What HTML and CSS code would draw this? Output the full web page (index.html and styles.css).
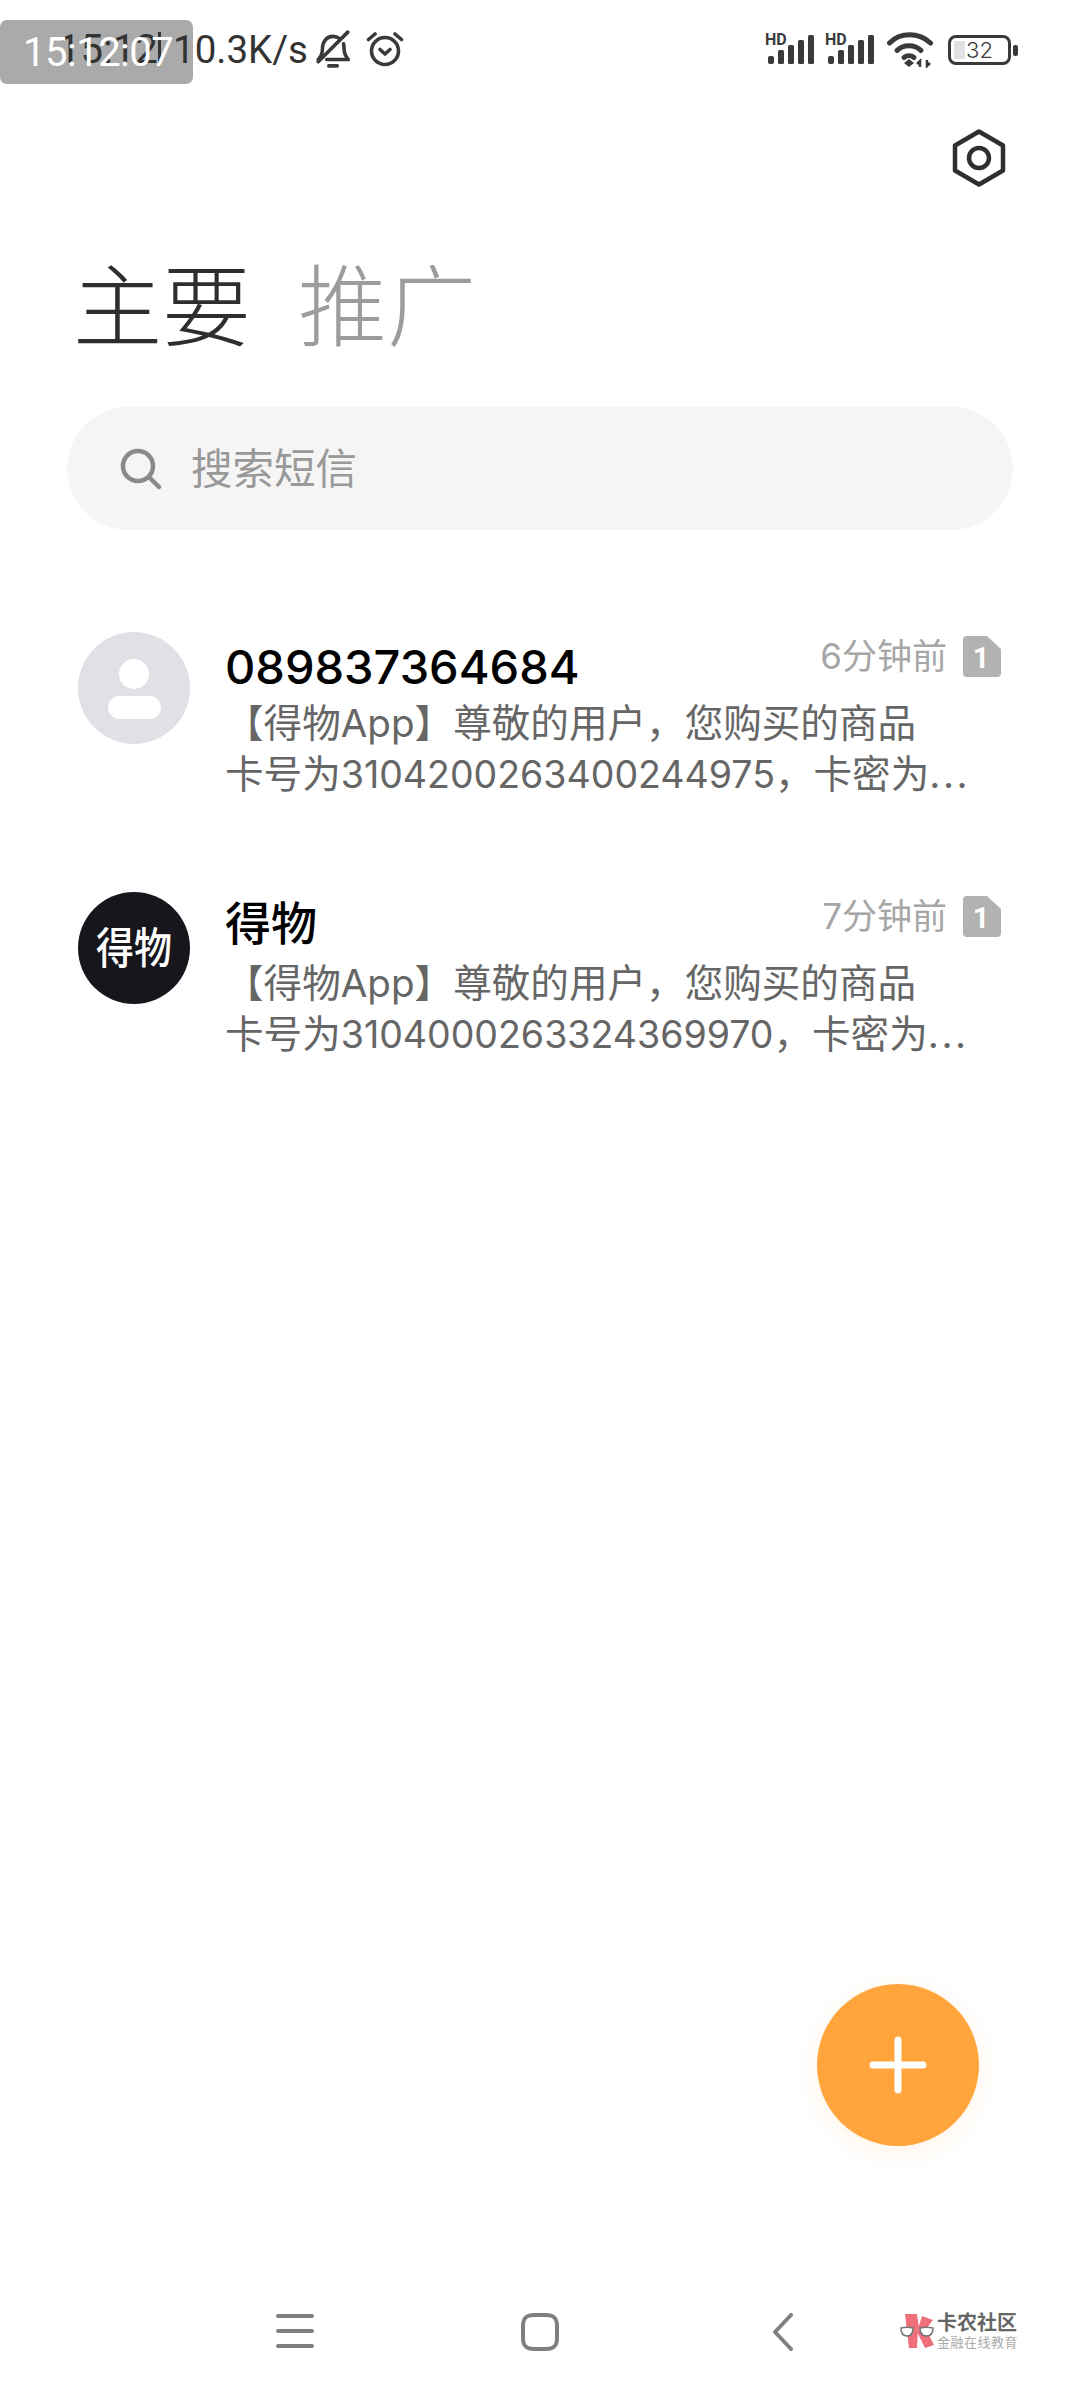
FILE: index.html
```html
<!DOCTYPE html>
<html lang="zh-CN">
<head>
<meta charset="utf-8">
<title>短信</title>
<link rel="stylesheet" href="styles.css">
</head>
<body>
<div class="page">
  <div class="clock-bg"></div>
  <div class="clock-text">15:12:07</div>
  <header class="status">
    <div class="status-left">
      <span class="status-time">15:12</span>
      <span class="status-sep"></span>
      <span class="status-speed">10.3K/s</span>
      <svg class="ico-bell" width="36" height="38" viewBox="0 0 34 36" fill="none" stroke="#3a3a3a" stroke-width="3.4" stroke-linecap="round" stroke-linejoin="round">
        <path d="M3 28c3-3 4-5 4-10 0-7 4-12 10-12 2.500 0 4.500 .8 6 2"/>
        <path d="M27 13c.5 2 .5 3 .5 5 0 5 1.500 7 4 10H11"/>
        <path d="M3 30 31 2"/>
        <path d="M13 34h8"/>
      </svg>
      <svg class="ico-alarm" width="38" height="36" viewBox="0 0 38 36" fill="none" stroke="#3a3a3a" stroke-width="3.6" stroke-linecap="round" stroke-linejoin="round">
        <circle cx="19" cy="20" r="13.500"/>
        <path d="M2.500 8.500 9 3"/>
        <path d="M35.500 8.500 29 3"/>
        <path d="M14 18.500l5 4.500 5-4.500"/>
      </svg>
    </div>
    <div class="status-right">
      <svg width="50" height="40" viewBox="0 -3 50 40">
        <text class="hd" x="0" y="12">HD</text>
        <g fill="#3a3a3a">
          <rect x="3" y="23" width="6" height="8" rx="2"/>
          <rect x="13" y="17" width="6" height="14" rx="1.500"/>
          <rect x="23" y="12" width="6" height="19" rx="1.500"/>
          <rect x="33" y="7" width="6" height="24" rx="1.500"/>
          <rect x="43" y="2" width="6" height="29" rx="1.500"/>
        </g>
      </svg>
      <svg class="sig2" width="50" height="40" viewBox="0 -3 50 40">
        <text class="hd" x="0" y="12">HD</text>
        <g fill="#3a3a3a">
          <rect x="3" y="23" width="6" height="8" rx="2"/>
          <rect x="13" y="17" width="6" height="14" rx="1.500"/>
          <rect x="23" y="12" width="6" height="19" rx="1.500"/>
          <rect x="33" y="7" width="6" height="24" rx="1.500"/>
          <rect x="43" y="2" width="6" height="29" rx="1.500"/>
        </g>
      </svg>
      <svg class="wifi" width="46" height="36" viewBox="0 0 46 36" fill="none" stroke="#3a3a3a" stroke-width="5" stroke-linecap="round">
        <path d="M2.500 11C13 0 32 0 43.500 11"/>
        <path d="M10 18.500C16 12 28 12 34 18.500"/>
        <path d="M17 25.500C20 23 24 23 27 25.500"/>
        <path d="M22 27l5 4-5 4-5-4z" fill="#3a3a3a" stroke="none"/>
        <path d="M33 35v-6l-3 3M40 28v6l3-3" stroke-width="2.500" stroke-linecap="butt"/>
      </svg>
      <div class="battery">
        <div class="battery-body">
          <span class="battery-fill"></span>
          <span class="battery-num">32</span>
        </div>
        <span class="battery-nub"></span>
      </div>
    </div>
  </header>

  <div class="settings-row">
    <svg width="54" height="58" viewBox="0 0 54 58" fill="none" stroke="#2f2f2f" stroke-width="4.500" stroke-linejoin="round">
      <path d="M27 2.500 51 16.500v25L27 55.500 3 41.500v-25z"/>
      <circle cx="27" cy="29" r="10"/>
    </svg>
  </div>

  <nav class="tabs">
    <span class="tab tab-active">主要</span>
    <span class="tab tab-muted">推广</span>
  </nav>

  <div class="search">
    <svg width="42" height="42" viewBox="0 0 42 42" fill="none" stroke="#8a8a8a" stroke-width="4.500" stroke-linecap="round">
      <circle cx="18" cy="18" r="15"/>
      <path d="M29 29l10 10"/>
    </svg>
    <span class="search-text">搜索短信</span>
  </div>

  <main class="list">
    <article class="row">
      <div class="avatar avatar-person">
        <span class="person-head"></span>
        <span class="person-body"></span>
      </div>
      <div class="row-main">
        <div class="row-top">
          <span class="name name-num">089837364684</span>
          <span class="time">6分钟前</span>
          <svg class="sim" width="38" height="41" viewBox="0 0 38 41">
            <path d="M4 0h20l14 13v24a4 4 0 0 1-4 4H4a4 4 0 0 1-4-4V4a4 4 0 0 1 4-4z" fill="#b2b2b2"/>
            <text class="sim-num" x="18" y="32">1</text>
          </svg>
        </div>
        <p class="line">【得物App】尊敬的用户，您购买的商品</p>
        <p class="line">卡号为<span class="digits">3104200263400244975</span>，卡密为<span class="dots">...</span></p>
      </div>
    </article>
    <article class="row">
      <div class="avatar avatar-brand"><span class="brand-text">得物</span></div>
      <div class="row-main">
        <div class="row-top">
          <span class="name name-cjk">得物</span>
          <span class="time">7分钟前</span>
          <svg class="sim" width="38" height="41" viewBox="0 0 38 41">
            <path d="M4 0h20l14 13v24a4 4 0 0 1-4 4H4a4 4 0 0 1-4-4V4a4 4 0 0 1 4-4z" fill="#b2b2b2"/>
            <text class="sim-num" x="18" y="32">1</text>
          </svg>
        </div>
        <p class="line">【得物App】尊敬的用户，您购买的商品</p>
        <p class="line">卡号为<span class="digits">3104000263324369970</span>，卡密为<span class="dots">...</span></p>
      </div>
    </article>
  </main>

  <button class="fab" type="button" aria-label="新建">
    <svg width="58" height="58" viewBox="0 0 58 58" stroke="#fff" stroke-width="7" stroke-linecap="round">
      <path d="M29 4v50M4 29h50"/>
    </svg>
  </button>

  <footer class="navbar">
    <svg class="nav-menu" width="38" height="36" viewBox="0 0 38 36" stroke="#808080" stroke-width="4" stroke-linecap="round">
      <path d="M2 3h34M2 18h34M2 33h34"/>
    </svg>
    <svg class="nav-home" width="38" height="38" viewBox="0 0 38 38" fill="none" stroke="#808080" stroke-width="4">
      <path d="M13 2h12c8 0 11 3 11 11v12c0 8-3 11-11 11H13C5 36 2 33 2 25V13C2 5 5 2 13 2z"/>
    </svg>
    <svg class="nav-back" width="22" height="38" viewBox="0 0 22 38" fill="none" stroke="#808080" stroke-width="4" stroke-linecap="round" stroke-linejoin="round">
      <path d="M19 2 3 19l16 17"/>
    </svg>
    <div class="brand">
      <svg width="38" height="36" viewBox="0 0 38 36">
        <path d="M5 1h12l2 14h-1L17 35H9z" fill="#ef6f7a"/>
        <path d="M22 3l11 4-7 9 8 16-9 3-8-16z" fill="#ef6f7a"/>
        <path d="M1 15c4-1 8-1 12 0 0 5-2 8-6 8s-6-3-6-8z" fill="#fff" stroke="#777" stroke-width="1.500"/>
        <path d="M20 15c4-1 9-1 13 0 0 5-2 8-6.500 8S20 20 20 15z" fill="#fff" stroke="#777" stroke-width="1.500"/>
      </svg>
      <div class="brand-words">
        <span class="brand-main">卡农社区</span>
        <span class="brand-sub">金融在线教育</span>
      </div>
    </div>
  </footer>
</div>
</body>
</html>
```

FILE: styles.css
```css
* { box-sizing: border-box; }
html, body { margin: 0; padding: 0; background: #fff; }
body { font-family: Inter, "Noto Sans CJK SC", sans-serif; }

.page {
  position: relative;
  width: 1080px;
  height: 2400px;
  display: flex;
  flex-direction: column;
  overflow: hidden;
  background: #fff;
}

.clock-bg {
  position: absolute;
  left: 0;
  top: 20px;
  width: 193px;
  height: 64px;
  background: #aaa;
  border-radius: 7px;
}
.clock-text {
  position: absolute;
  z-index: 2;
  left: 23px;
  top: 20px;
  color: #fff;
  font-family: Roboto, sans-serif;
  font-size: 40px;
  letter-spacing: -.500px;
  line-height: 66px;
  white-space: nowrap;
}

.status {
  position: relative;
  z-index: 1;
  height: 100px;
  flex: none;
  display: flex;
  align-items: flex-start;
  justify-content: space-between;
  padding: 30px 62px 0 58px;
}
.status-left { display: flex; align-items: center; height: 38px; color: #333; }
.status-time { font-family: Roboto, sans-serif; font-size: 40px; width: 100px; white-space: nowrap; }
.status-sep { width: 3px; height: 34px; background: #333; margin-right: 12px; }
.status-speed { font-family: Roboto, sans-serif; font-size: 38.500px; width: 142px; white-space: nowrap; }
.ico-alarm { margin-left: 15px; }

.status-right { display: flex; align-items: center; height: 36px; margin-top: 2px; }
.hd { font: 700 16px Roboto, sans-serif; fill: #3a3a3a; }
.sig2 { margin-left: 10px; }
.wifi { margin-left: 12px; }
.battery { display: flex; align-items: center; margin-left: 15px; }
.battery-body {
  position: relative;
  width: 63px;
  height: 30px;
  border: 3.500px solid #3a3a3a;
  border-radius: 8px;
  display: flex;
  align-items: center;
  justify-content: center;
}
.battery-fill {
  position: absolute;
  left: 3px;
  top: 3px;
  bottom: 3px;
  width: 11px;
  background: #e2e2e2;
}
.battery-num { position: relative; font-size: 22px; color: #3a3a3a; font-weight: 300; }
.battery-nub { width: 5px; height: 11px; margin-left: 2px; background: #3a3a3a; border-radius: 2px; }

.settings-row {
  flex: none;
  height: 100px;
  display: flex;
  justify-content: flex-end;
  padding: 29px 74px 0 0;
}

.tabs { flex: none; display: flex; gap: 47px; height: 207px; padding: 52px 0 0 73px; }
.tab { font-size: 89px; line-height: 110px; font-weight: 300; }
.tab-active { color: #2e2e2e; }
.tab-muted { color: #9c9c9c; }

.search {
  flex: none;
  margin: 0 67px;
  height: 123px;
  border-radius: 62px;
  background: #f5f5f5;
  display: flex;
  align-items: center;
  padding-left: 53px;
}
.search-text { margin-left: 29px; padding-bottom: 6px; font-size: 41.500px; color: #999; }

.list { flex: none; display: flex; flex-direction: column; padding: 102px 79px 0 78px; }
.row { display: flex; height: 260px; }
.avatar { flex: none; width: 112px; height: 112px; border-radius: 50%; }
.avatar-person {
  background: #dfe1e6;
  display: flex;
  flex-direction: column;
  align-items: center;
  padding-top: 27px;
}
.person-head { width: 30px; height: 30px; border-radius: 50%; background: #fff; }
.person-body { width: 53px; height: 23px; margin-top: 7px; border-radius: 12px; background: #fff; }
.avatar-brand {
  background: #16161c;
  display: flex;
  align-items: center;
  justify-content: center;
}
.brand-text {
  color: #fff;
  font-size: 38px;
  font-weight: 500;
  line-height: 1;
  white-space: nowrap;
  transform: scaleY(1.150);
}

.row-main { flex: 1; min-width: 0; margin-left: 35px; }
.row-top { display: flex; align-items: flex-start; height: 64px; margin-bottom: 2px; }
.name { color: #000; line-height: 64px; white-space: nowrap; }
.name-num { font-size: 47px; font-weight: 500; margin-top: 3px; }
.name-cjk { font-size: 46px; font-weight: 500; margin-top: -1px; }
.time { margin-left: auto; font-size: 35px; line-height: 48px; color: #a6a6a6; white-space: nowrap; }
.sim { flex: none; margin: 4px 0 0 16px; }
.sim-num { font: 700 29px Roboto, sans-serif; fill: #fff; text-anchor: middle; }

.line {
  margin: 0;
  font-size: 38.600px;
  line-height: 51px;
  color: #666;
  white-space: nowrap;
}
.digits { font-size: 37.500px; }
.dots { letter-spacing: 2.500px; }

.fab {
  position: absolute;
  left: 817px;
  top: 1984px;
  width: 162px;
  height: 162px;
  padding: 0;
  border: 0;
  border-radius: 50%;
  background: #ffa53b;
  box-shadow: 0 6px 24px rgba(255, 165, 59, .12);
  display: flex;
  align-items: center;
  justify-content: center;
}

.navbar {
  margin-top: auto;
  flex: none;
  height: 87px;
  position: relative;
  display: flex;
  align-items: flex-start;
  padding: 0 0 0 276px;
}
.navbar svg { flex: none; }
.nav-home { margin-left: 207px; }
.nav-back { margin-left: 213px; }
.brand { display: flex; align-items: center; margin-left: 106px; margin-top: -1px; }
.brand-words { display: flex; flex-direction: column; margin-left: -1px; }
.brand-main { font-size: 20px; line-height: 23px; font-weight: 700; color: #666; white-space: nowrap; }
.brand-sub { font-size: 13px; line-height: 15px; color: #aaa; white-space: nowrap; letter-spacing: .5px; }
```
